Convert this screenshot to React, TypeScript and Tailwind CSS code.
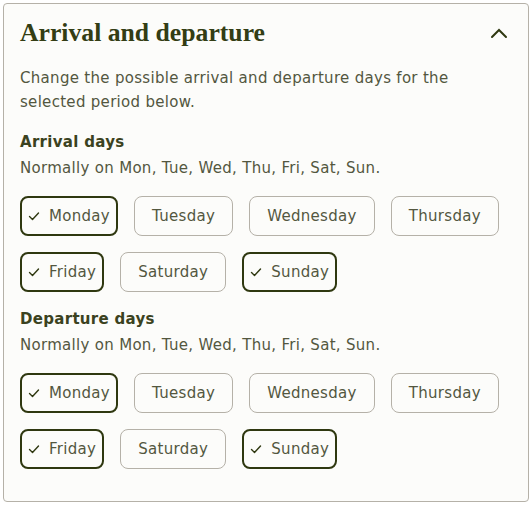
import React, { useState } from 'react';

const days = ['Monday', 'Tuesday', 'Wednesday', 'Thursday', 'Friday', 'Saturday', 'Sunday'];

function Check() {
  return (
    <svg width="12" height="12" viewBox="0 0 12 12" fill="none" className="mr-[9px]">
      <path d="M1.5 6.5l3 3L10.5 3" stroke="#2f3810" strokeWidth="1.4" strokeLinecap="round" strokeLinejoin="round" />
    </svg>
  );
}

function DayGroup({ title, initial }: { title: string; initial: string[] }) {
  const [selected, setSelected] = useState<string[]>(initial);
  const toggle = (d: string) =>
    setSelected((s) => (s.includes(d) ? s.filter((x) => x !== d) : [...s, d]));

  return (
    <div>
      <h3 className="text-[15px] font-semibold leading-6 text-[#3b4220]">{title}</h3>
      <p className="mt-[2px] text-[15px] leading-6 text-[#53573f]">Normally on Mon, Tue, Wed, Thu, Fri, Sat, Sun.</p>
      <div className="mt-4 flex flex-wrap gap-4">
        {days.map((d) => {
          const on = selected.includes(d);
          return (
            <button
              key={d}
              onClick={() => toggle(d)}
              className={`flex h-10 items-center rounded-lg text-[15px] text-[#53573f] ${
                on ? 'border-2 border-[#2f3810] px-[6px]' : 'border border-[#b5b1a8] px-[17px]'
              }`}
            >
              {on && <Check />}
              {d}
            </button>
          );
        })}
      </div>
    </div>
  );
}

export default function App() {
  const [open, setOpen] = useState(true);

  return (
    <div className="p-[3px] font-['DejaVu_Sans',sans-serif] tracking-[0.3px]">
      <div className="h-[499px] rounded border border-[#b5b1a8] bg-[#fcfcfa] px-4 pt-[13px]">
        <div className="flex items-center justify-between">
          <h2 className="font-['Liberation_Serif',serif] text-[25.7px] font-bold leading-8 tracking-normal text-[#333d14]">
            Arrival and departure
          </h2>
          <button onClick={() => setOpen(!open)} className="p-1">
            <svg width="18" height="12" viewBox="0 0 18 12" fill="none">
              <path d="M2 10l7-7 7 7" stroke="#2f3810" strokeWidth="2" strokeLinecap="round" />
            </svg>
          </button>
        </div>
        {open && (
          <>
            <p className="mt-[17px] text-[15px] leading-6 text-[#53573f]">
              Change the possible arrival and departure days for the selected period below.
            </p>
            <div className="mt-[16px] flex flex-col gap-[15px]">
              <DayGroup title="Arrival days" initial={['Monday', 'Friday', 'Sunday']} />
              <DayGroup title="Departure days" initial={['Monday', 'Friday', 'Sunday']} />
            </div>
          </>
        )}
      </div>
    </div>
  );
}
